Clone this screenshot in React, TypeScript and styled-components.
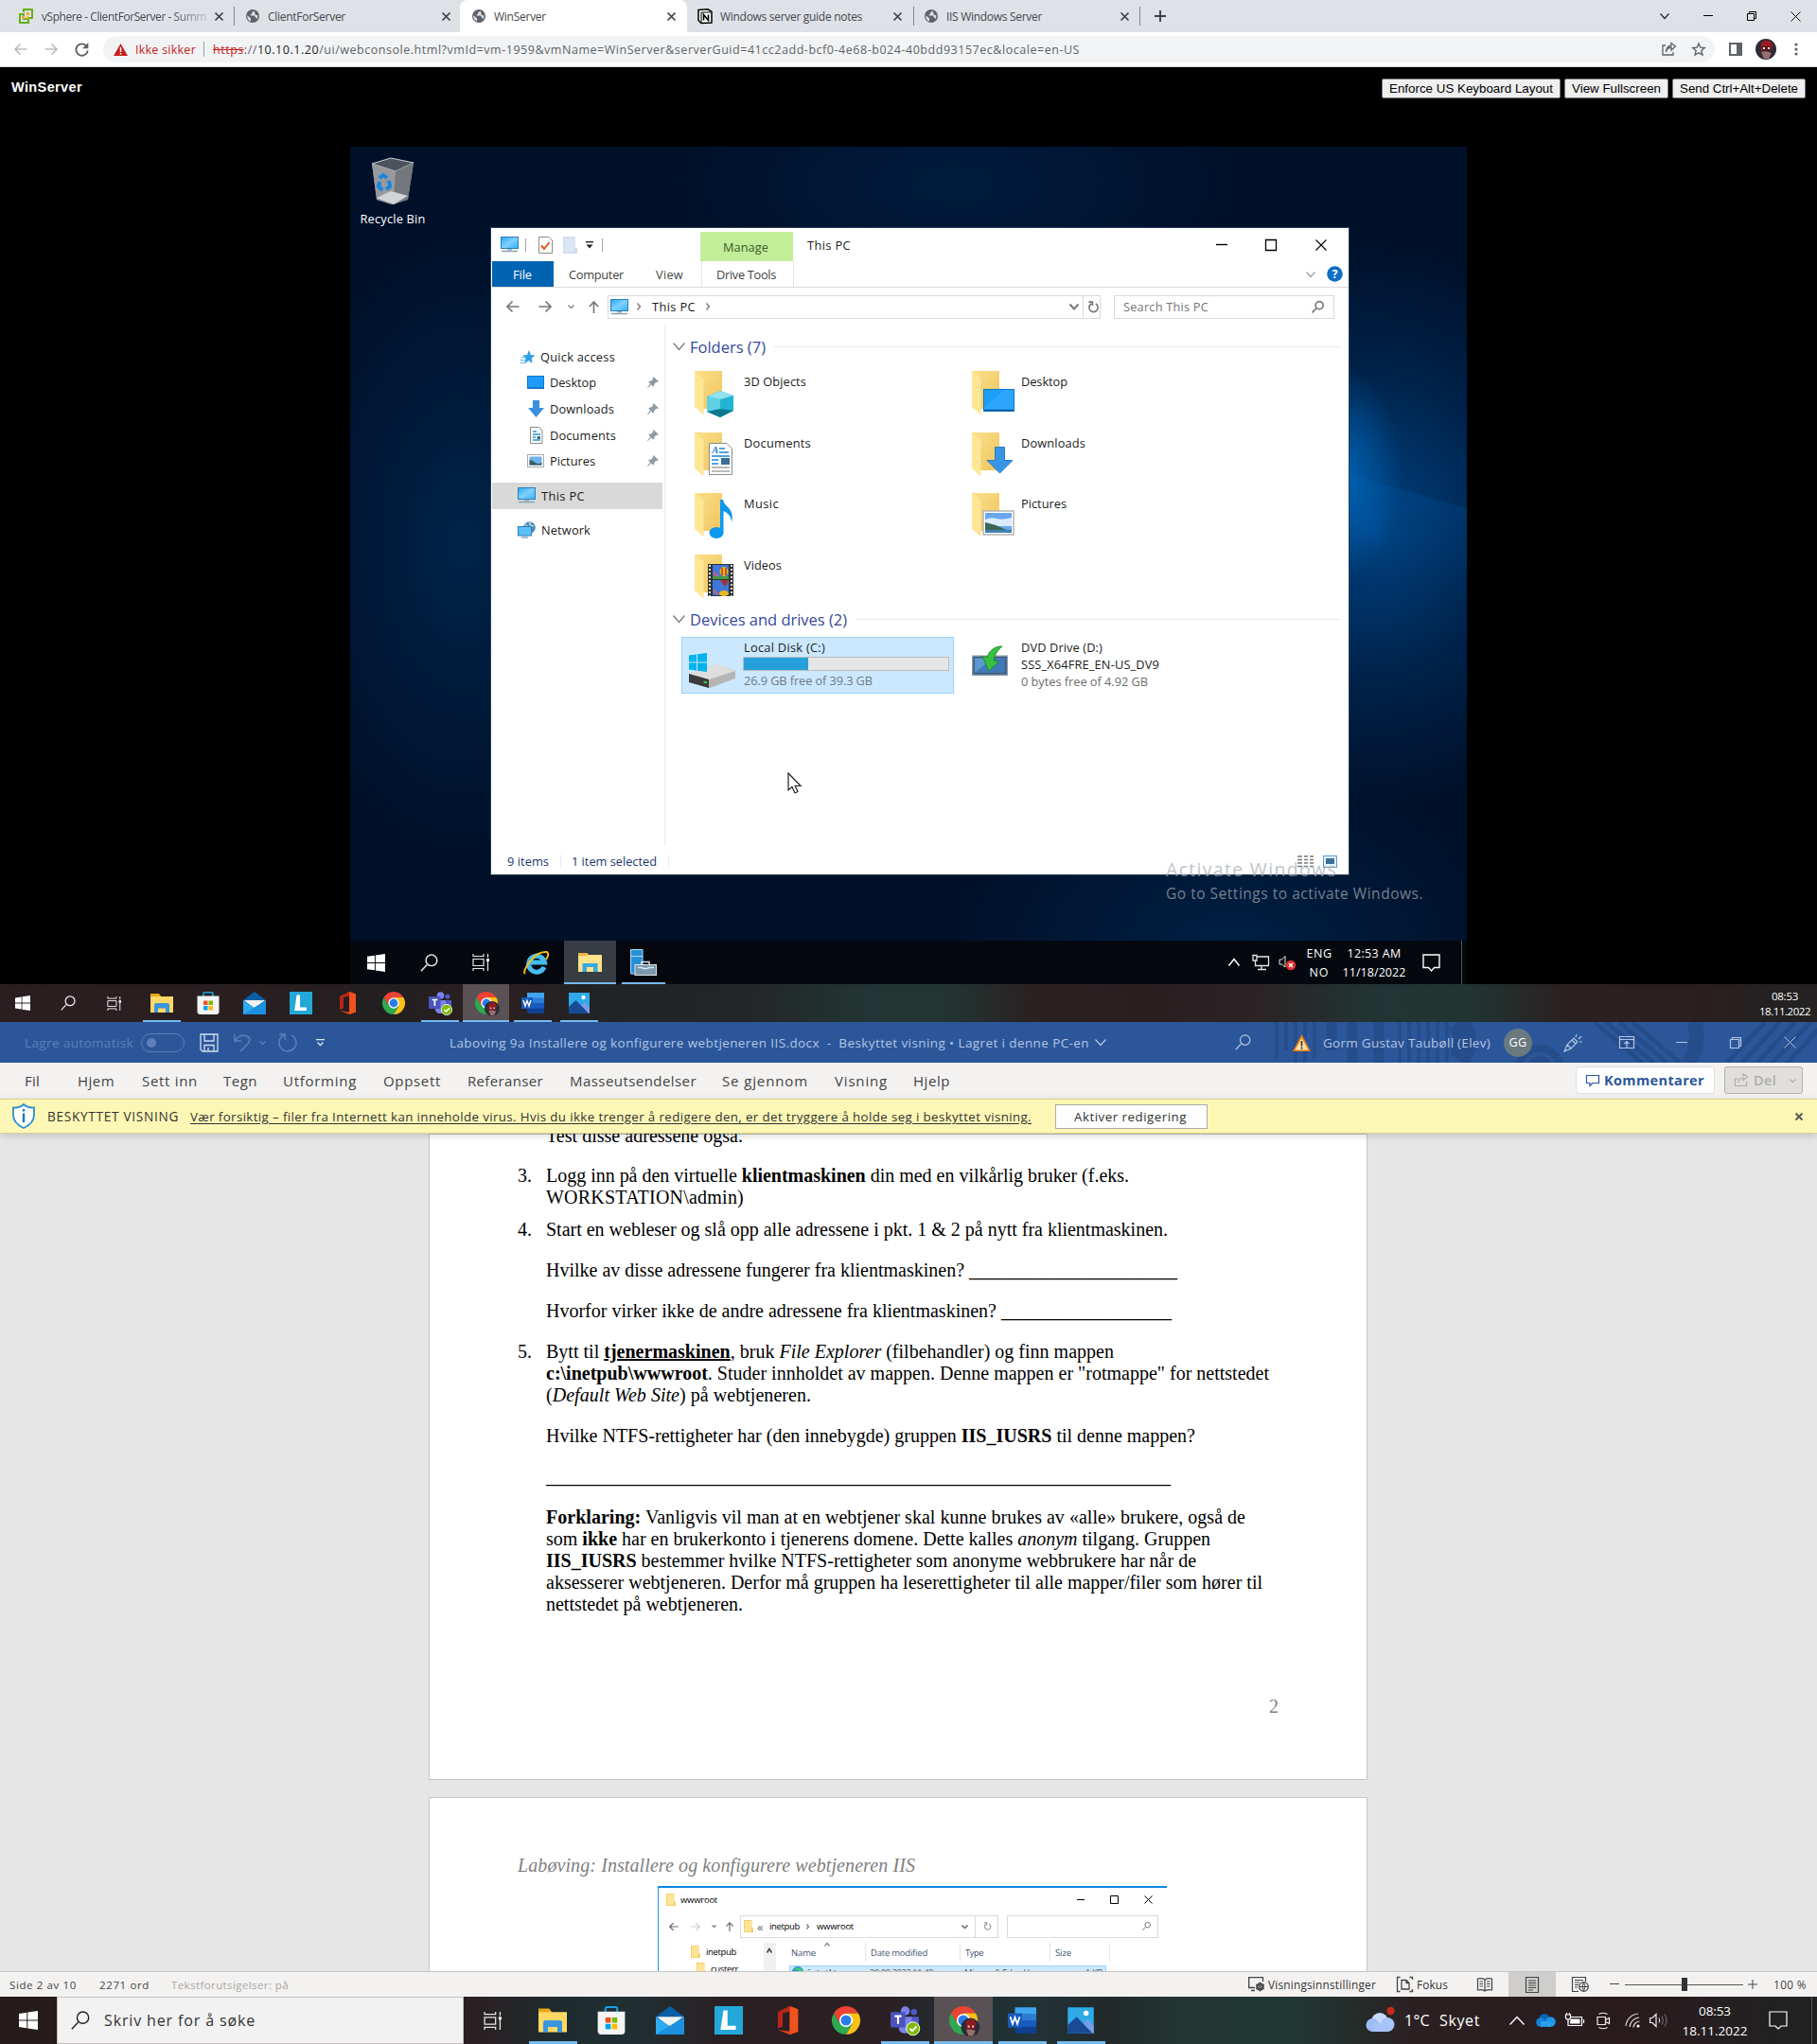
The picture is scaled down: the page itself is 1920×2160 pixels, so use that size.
import React, { useLayoutEffect, useRef } from 'react';
import styled, { createGlobalStyle, css } from 'styled-components';

const UI = `"Open Sans", "Noto Sans", sans-serif`;
const ARIAL = `"Liberation Sans", Arial, sans-serif`;
const SERIF = `"Liberation Serif", "Times New Roman", serif`;

const Global = createGlobalStyle`
  *, *::before, *::after { box-sizing: border-box; }
  html, body { margin: 0; padding: 0; background: #000; }
  body { width: 1920px; height: 2160px; overflow: hidden; font-family: ${UI}; }
`;

/* ---------- shared primitives ---------- */

type TextProps = {
  $w?: number; $ml?: number; $size?: number; $color?: string; $weight?: number; $font?: string;
  $italic?: boolean; $under?: boolean;
};

const TextBox = styled.span<TextProps>`
  display: block;
  flex: none;
  width: ${p => (p.$w ? p.$w + 'px' : 'auto')};
  margin-left: ${p => p.$ml || 0}px;
  font-family: ${p => p.$font || UI};
  font-size: ${p => p.$size || 13}px;
  font-weight: ${p => p.$weight || 400};
  font-style: ${p => (p.$italic ? 'italic' : 'normal')};
  color: ${p => p.$color || '#000'};
  white-space: pre;
  & > span { display: inline-block; ${p => p.$under && css`text-decoration: underline; text-underline-offset: 2px;`} }
`;

/* Single line of text whose tracking is adjusted to fill the given width. */
function Label({ w, ml, size, color, weight, font, italic, under, children }: {
  w?: number; ml?: number; size?: number; color?: string; weight?: number; font?: string;
  italic?: boolean; under?: boolean; children: React.ReactNode;
}) {
  const ref = useRef<HTMLSpanElement>(null);
  useLayoutEffect(() => {
    const el = ref.current;
    if (!el || !w) return;
    el.style.letterSpacing = '0px';
    const n = (el.textContent || '').length;
    el.style.letterSpacing = (w - el.getBoundingClientRect().width) / n + 'px';
  }, [w]);
  return (
    <TextBox $w={w} $ml={ml} $size={size} $color={color} $weight={weight} $font={font} $italic={italic} $under={under}>
      <span ref={ref}>{children}</span>
    </TextBox>
  );
}

const Glyph = styled.svg<{ $ml?: number }>`
  display: block;
  flex: none;
  overflow: visible;
  margin-left: ${p => p.$ml || 0}px;
`;

type IconProps = { w: number; h: number; ml?: number };

function Line({ w, h, ml, d, c = '#000', sw = 1, fill = 'none' }: IconProps & { d: string; c?: string; sw?: number; fill?: string }) {
  return (
    <Glyph width={w} height={h} viewBox={`0 0 ${w} ${h}`} $ml={ml}>
      <path d={d} stroke={c} strokeWidth={sw} fill={fill} />
    </Glyph>
  );
}

const Rule = styled.i<{ $w?: number; $h: number; $ml?: number; $c: string }>`
  display: block;
  flex: none;
  width: ${p => p.$w || 1}px;
  height: ${p => p.$h}px;
  margin-left: ${p => p.$ml || 0}px;
  background: ${p => p.$c};
`;

const Spring = styled.i`flex: 1;`;

/* ---------- common line icons ---------- */

const Cross = ({ s = 10, ml, c, sw = 1 }: { s?: number; ml?: number; c?: string; sw?: number }) =>
  <Line w={s} h={s} ml={ml} c={c} sw={sw} d={`M.5 .5L${s - 0.5} ${s - 0.5}M${s - 0.5} .5L.5 ${s - 0.5}`} />;
const Minus = ({ s = 10, ml, c, sw = 1 }: { s?: number; ml?: number; c?: string; sw?: number }) =>
  <Line w={s} h={2} ml={ml} c={c} sw={sw} d={`M0 .5H${s}`} />;
const Restore = ({ ml, c = '#000' }: { ml?: number; c?: string }) =>
  <Line w={10} h={10} ml={ml} c={c} d="M.5 2.5H7.5V9.5H.5zM2.5 2.5V.5H9.5V7.5H7.5" />;
const Chevron = ({ w = 10, h = 6, ml, c, sw = 1.2 }: { w?: number; h?: number; ml?: number; c?: string; sw?: number }) =>
  <Line w={w} h={h} ml={ml} c={c} sw={sw} d={`M.5 .5L${w / 2} ${h - 0.5}L${w - 0.5} .5`} />;
const Caret = ({ w = 10, h = 6, ml, c, sw = 1.2 }: { w?: number; h?: number; ml?: number; c?: string; sw?: number }) =>
  <Line w={w} h={h} ml={ml} c={c} sw={sw} d={`M.5 ${h - 0.5}L${w / 2} .5L${w - 0.5} ${h - 0.5}`} />;
const Right = ({ ml, s = 4, c = '#777' }: { ml?: number; s?: number; c?: string }) =>
  <Line w={s} h={s * 2} ml={ml} c={c} sw={1.3} d={`M.5 .5L${s - 0.5} ${s}L.5 ${s * 2 - 0.5}`} />;
const ArrowL = ({ s = 14, ml, c, sw = 1.7 }: { s?: number; ml?: number; c?: string; sw?: number }) => (
  <Glyph width={s} height={s} viewBox="0 0 14 14" $ml={ml}><path d="M13.5 7H1M6.5 1.5L1 7L6.5 12.5" stroke={c} strokeWidth={sw} fill="none" /></Glyph>
);
const ArrowR = ({ s = 14, ml, c, sw = 1.7 }: { s?: number; ml?: number; c?: string; sw?: number }) => (
  <Glyph width={s} height={s} viewBox="0 0 14 14" $ml={ml}><path d="M.5 7H13M7.5 1.5L13 7L7.5 12.5" stroke={c} strokeWidth={sw} fill="none" /></Glyph>
);
const ArrowU = ({ s = 14, ml, c = '#777' }: { s?: number; ml?: number; c?: string }) => (
  <Glyph width={s} height={s} viewBox="0 0 14 14" $ml={ml}><path d="M7 14V1M2 6.5L7 1L12 6.5" stroke={c} strokeWidth={1.8} fill="none" /></Glyph>
);
const Reload = ({ s = 13, ml, c = '#777', sw = 1.8 }: { s?: number; ml?: number; c?: string; sw?: number }) => (
  <Glyph width={s} height={s} viewBox="0 0 14 14" $ml={ml}>
    <path d="M9.5 3.2A5 5 0 1 1 4.500 3.200M1.500 1.200H5.800V5.500" stroke={c} strokeWidth={sw} fill="none" />
  </Glyph>
);
const Lens = ({ s = 14, ml, c = '#777', sw = 1.4 }: { s?: number; ml?: number; c?: string; sw?: number }) => (
  <Glyph width={s} height={s} viewBox="0 0 14 14" $ml={ml}>
    <path d="M.6 13.4L5.3 8.4" stroke={c} strokeWidth={sw} /><circle cx="8.8" cy="5" r="4.3" stroke={c} strokeWidth={sw} fill="none" />
  </Glyph>
);

/* ---------- coloured icons ---------- */

const Globe = ({ ml }: { ml?: number }) => (
  <Glyph width="14" height="14" viewBox="0 0 14 14" $ml={ml}>
    <circle cx="7" cy="7" r="7" fill="#5f6368" />
    <path d="M1.4 6.2L5 9.5V12.4A5.6 5.6 0 0 1 1.4 6.2M8.5 1.6C7.8 2.5 6 2.8 6 4.3S4.4 5 4.4 6.6H8.4C9.6 6.6 9.4 8.6 10.6 8.8L11.3 10.2A5.5 5.5 0 0 0 12.4 6.3C11 6.4 9.3 5.9 9.5 4.6S8.5 3 8.5 1.6z" fill="#dee1e6" />
  </Glyph>
);

const PcIcon = ({ ml, s = 19 }: { ml?: number; s?: number }) => (
  <Glyph width={s} height={(s * 17) / 19} viewBox="0 0 19 17" $ml={ml}>
    <defs><linearGradient id="pcg" x1="0" y1="0" x2="1" y2="1"><stop offset="0" stopColor="#2aa6f5" /><stop offset=".5" stopColor="#7fd0ff" /><stop offset="1" stopColor="#35b0fa" /></linearGradient></defs>
    <rect x=".5" y=".5" width="18" height="12" fill="url(#pcg)" stroke="#2b7fb5" />
    <path d="M7 13H12V14.5H7z" fill="#9bb3c2" /><path d="M1 15.5H18" stroke="#8aa4b5" strokeWidth="1.6" />
  </Glyph>
);

const NetIcon = ({ ml }: { ml?: number }) => (
  <Glyph width="19" height="18" viewBox="0 0 19 18" $ml={ml}>
    <circle cx="12.5" cy="6.5" r="6.3" fill="#4d8eb0" /><path d="M8 3Q12 6 9 10M14 .6Q10 4 17 5" stroke="#b9dcec" fill="none" strokeWidth="1.5" />
    <rect x=".5" y="5.5" width="14" height="9.5" fill="#5cc0fa" stroke="#2b7fb5" /><path d="M4 17H11" stroke="#8aa4b5" strokeWidth="1.4" />
  </Glyph>
);

const SmallFolder = ({ ml, w = 10, h = 13, ghost }: { ml?: number; w?: number; h?: number; ghost?: boolean }) => (
  <Glyph width={w} height={h} viewBox="0 0 10 13" preserveAspectRatio="none" $ml={ml}>
    <path d="M0 0H8.5V8.500H10V13H0z" fill={ghost ? '#cfdcf0' : '#f5d067'} /><path d="M1 1H8V12H1z" fill={ghost ? '#dbe5f5' : '#fde496'} />
  </Glyph>
);

function SideIcon({ kind }: { kind: string }) {
  return (
    <Glyph width="19" height="18" viewBox="0 0 19 18">
      {kind === 'star' && <><path d="M11 2L12.8 6.900L17.500 7.400L13.800 10.500L14.500 16L10.500 13L6 16.500L7.600 11L4.500 7.600L9 7z" fill="#2f9fe8" /><path d="M3 9.500H8M1.500 12.500H7M2 15.500H6" stroke="#62b6ee" strokeWidth="1.200" /></>}
      {kind === 'Desktop' && <><rect x=".5" y="2.5" width="17" height="13" fill="#1e9cf8" stroke="#1078c8" /><path d="M1 14.5H17" stroke="#0d68b0" strokeDasharray="2 1" /></>}
      {kind === 'Downloads' && <path d="M6 0H13V8H18L9.5 18L1 8H6z" fill="#3c8fdd" />}
      {kind === 'Documents' && <><path d="M3.5 .5H12.5L16 4V17.5H3.5z" fill="#fff" stroke="#888" /><path d="M6 5H10M6 8H14M6 11H9M6 14H14" stroke="#2d8fd0" strokeWidth="1.3" /><path d="M10.5 10H14V13H10.5z" fill="#3c6c8c" /></>}
      {kind === 'Pictures' && <><rect x=".5" y="2.5" width="17" height="13" fill="#fff" stroke="#aaa" /><rect x="2.5" y="4.5" width="13" height="9" fill="#6fb3f0" /><path d="M2.5 8Q7 9 9 11T15.5 11V13.5H2.5z" fill="#37615f" /></>}
    </Glyph>
  );
}

const Pin = ({ ml }: { ml?: number }) => (
  <Glyph width="12" height="12" viewBox="0 0 12 12" $ml={ml}><path d="M6.5 0L12 5.2L10.5 6L9.3 5.8L7.3 8L7.2 10L6.2 10.6L4.3 8.5L.6 12L0 11.6L3.3 7.6L1.2 5.7L2 4.7L4 4.6L6.2 2.5L5.9 1z" fill="#8e9aa4" /></Glyph>
);

function BigFolder({ kind }: { kind: string }) {
  return (
    <Glyph width="45" height="50" viewBox="0 0 45 50">
      <defs>
        <linearGradient id="fold" x1="0" y1="0" x2="1" y2="1"><stop offset="0" stopColor="#fbe08a" /><stop offset="1" stopColor="#eec45e" /></linearGradient>
      </defs>
      <path d="M0 1H29V41H8z" fill="url(#fold)" />
      <path d="M0 1L9.5 9V47.5L0 39z" fill="#ffe596" />
      {kind === '3D Objects' && <g><path d="M13 28L27 22L41 27V43L27 50L13 44z" fill="#22b4d2" /><path d="M13 28L27 22L41 27L27 31z" fill="#8fe3ee" /><path d="M13 28L27 31V50L13 44z" fill="#5ed2e4" /><path d="M13 44L27 41L41 43L27 50z" fill="#0c7890" /></g>}
      {kind === 'Documents' && <g><path d="M15.5 12.5H34L39.5 18V45.5H15.5z" fill="#fff" stroke="#8c8c8c" /><text x="18" y="23" fontFamily="Liberation Serif" fontStyle="italic" fontWeight="700" fontSize="11" fill="#1b87d4">A</text><path d="M26 18H32M26 22H36M18 26H37M18 30H25M18 34H25" stroke="#1b87d4" strokeWidth="1.4" /><path d="M28 28H37V35H28z" fill="#3b6f95" /><path d="M18 38H37M18 42H37" stroke="#777" /></g>}
      {kind === 'Music' && <g><ellipse cx="23" cy="43" rx="7.5" ry="6" fill="#0a98f0" /><path d="M27 8H30C31 16 43 17 39 32C39 24 33 21 30.5 20V43H27z" fill="#0a98f0" /></g>}
      {kind === 'Videos' && <g><rect x="14" y="11" width="27" height="34" fill="#333" /><path d="M16 12V45M39 12V45" stroke="#ddd" strokeWidth="2" strokeDasharray="2 2" /><path d="M19 12H36V27H19zM19 28H36V44H19z" fill="#3f78d8" /><path d="M19 24H36V27H19z" fill="#3f9b46" /><ellipse cx="31" cy="19" rx="4.5" ry="5" fill="#e8b820" /><path d="M29 15V23M33 15V23" stroke="#b32424" strokeWidth="1.3" /><path d="M27 28H36L32 35z" fill="#a53030" /><ellipse cx="31" cy="42" rx="5" ry="3" fill="#e8b820" /><path d="M20 20L25 24M20 39L25 43" stroke="#e25a6b" strokeWidth="2" /></g>}
      {kind === 'Desktop' && <g><rect x="12.5" y="20.5" width="32" height="23" fill="#1e9ffb" stroke="#0f77c4" /><path d="M13 40L34 21H44V42H13z" fill="#35acff" opacity=".6" /><path d="M13 42.5H44" stroke="#0b5d9c" strokeWidth="1.5" /></g>}
      {kind === 'Downloads' && <path d="M24.5 16.5H34.500V30.500H43L29.500 44L16 30.500H24.500z" fill="#3795e6" stroke="#2b7cc4" />}
      {kind === 'Pictures' && <g><rect x="12" y="20" width="32" height="25" fill="#fff" stroke="#b5b5b5" strokeWidth="1.5" /><rect x="14" y="22" width="28" height="21" fill="#6aa7ec" /><path d="M14 29Q20 26 26 28T42 27V36H14z" fill="#d9ecfb" /><path d="M14 32Q24 34 32 38T42 39V43H14z" fill="#3e6455" /><path d="M14 40H42V43H14z" fill="#4182b0" /></g>}
    </Glyph>
  );
}

const DiskIcon = () => (
  <Glyph width="50" height="38" viewBox="0 0 50 38">
    <path d="M0 22L30 12L49 19V27L22 37L0 31z" fill="#b5b5b5" /><path d="M0 22L30 12L49 19L21 28z" fill="#dedede" /><path d="M0 22L21 28V37L0 31z" fill="#3b3b3b" /><path d="M15.500 30.500L19 31.500" stroke="#3fd04a" strokeWidth="2.2" />
    <path d="M0 2.500L8 1.500V9.500H0zM9 1.300L19 0V9.500H9zM0 10.500H8V18.500L0 17.500zM9 10.500H19V20L9 18.700z" fill="#00b3ee" />
  </Glyph>
);

const DvdIcon = () => (
  <Glyph width="42" height="34" viewBox="0 0 42 34">
    <path d="M0 10.500H38V32H0z" fill="#8397ab" /><path d="M1.500 12H36.500V30.500H1.500z" fill="#3d5878" /><path d="M3 13.500H35V29H3z" fill="#5b98d2" /><path d="M3 29L22 13.500H35V29z" fill="#3f79b6" />
    <path d="M32 1C23 1 17 7 16.500 13L11 11.500L18 27L28 17.500L23 16C24 9 28 4 32 1z" fill="#35c13f" stroke="#1f8f2c" />
  </Glyph>
);

function WinLogo({ s = 19 }: { s?: number }) {
  return <Glyph width={s} height={s} viewBox="0 0 20 20"><path d="M0 3L8.300 1.800V9.500H0zM9.300 1.600L20 0V9.500H9.300zM0 10.500H8.300V18.200L0 17zM9.300 10.500H20V20L9.300 18.400z" fill="#fff" /></Glyph>;
}

const TaskView = ({ s = 16 }: { s?: number }) => (
  <Glyph width={s} height={s} viewBox="0 0 18 18"><path d="M1 0V2.500H12V0M1 18V15.500H12V18M1 5.500H12V12.500H1zM16.500 0V4M16.500 8V18" fill="none" stroke="#e8e8e8" strokeWidth="1.200" /><path d="M15 5H18V8H15z" fill="#fff" /></Glyph>
);

const Avatar = ({ s, ml }: { s: number; ml?: number }) => (
  <Glyph width={s} height={s} viewBox="0 0 22 22" $ml={ml}>
    <circle cx="11" cy="11" r="11" fill="#2c2c38" /><path d="M6 4L9 2H15L18 6L16 13H6z" fill="#9c1c22" /><path d="M7 8H16V13H7z" fill="#5a1519" /><path d="M8 9H10V11H8zM13 9H15V11H13z" fill="#f0e8e8" /><path d="M6 14Q11 12 17 15L14 21H9z" fill="#9a6e6c" />
  </Glyph>
);

function AppIcon({ name, s }: { name: string; s: number }) {
  return (
    <Glyph width={s} height={s} viewBox="0 0 24 24">
      {name === 'explorer' && <><path d="M0 2H9L11 4.500V8H0z" fill="#e6a817" /><path d="M0 5H24V22H0z" fill="#ffd866" /><path d="M4 22V14Q4 12 6 12H18Q20 12 20 14V22H16V17.500H8V22z" fill="#3a96dd" /></>}
      {name === 'store' && <><path d="M7 6V2Q7 .8 8 .8H16Q17 .8 17 2V6" fill="none" stroke="#1ba1e2" strokeWidth="1.600" /><path d="M.5 4.500H23.500V21Q23.500 24 20.500 24H3.500Q.5 24 .5 21z" fill="#f4f4f4" /><path d="M7 9.500H11.500V14H7z" fill="#f25022" /><path d="M12.500 9.500H17V14H12.500z" fill="#7fba00" /><path d="M7 15H11.500V19.500H7z" fill="#00a4ef" /><path d="M12.500 15H17V19.500H12.500z" fill="#ffb900" /></>}
      {name === 'mail' && <><path d="M0 9L12 0L24 9V12H0z" fill="#0a5ea8" /><path d="M1 9H23L12 18z" fill="#f2f2f2" /><path d="M0 9L12 17L24 9V24H0z" fill="#2eaaf0" /><path d="M0 24L24 9V24z" fill="#1c8fdf" /></>}
      {name === 'lens' && <><rect x="0" y="0" width="24" height="24" fill="#23a8d8" /><path d="M5 20L7.500 4V17z" fill="#0c4660" /><path d="M7.500 3.500H11V16.500H18V20H5z" fill="#fff" /></>}
      {name === 'office' && <><path d="M14 0L21 2.500V21.500L14 24L4 20.200L14 21.200V4.200L8 6V17L4 18.800V5z" fill="#dc3e15" /><path d="M14 0L21 2.500V21.500L14 24z" fill="#f0521e" /><path d="M14 0L4 5V18.800L8 17V6L14 4z" fill="#b8231a" /></>}
      {(name === 'chrome' || name === 'chromeUser') && <><path d="M1.600 6A12 12 0 0 1 22.400 6H12L6.800 15z" fill="#ea4335" /><path d="M22.400 6A12 12 0 0 1 12 24L17.200 15L12 6z" fill="#fbc116" /><path d="M12 24A12 12 0 0 1 1.600 6L6.800 15H17.200z" fill="#2da94f" /><circle cx="12" cy="12" r="5.700" fill="#fff" /><circle cx="12" cy="12" r="4.400" fill="#2a7de9" /></>}
      {name === 'chromeUser' && <g transform="translate(10 10) scale(.72)"><circle cx="11" cy="11" r="11" fill="#2c2c38" /><path d="M6 4L9 2H15L18 6L16 13H6z" fill="#8d1b21" /><path d="M8 9H10V11H8zM13 9H15V11H13z" fill="#f0d8d8" /><path d="M6 14Q11 12 17 15L14 21H9z" fill="#9a6e6c" /></g>}
      {name === 'teams' && <><circle cx="12.500" cy="4" r="3.800" fill="#7b83eb" /><circle cx="19.800" cy="5" r="2.600" fill="#5059c9" /><path d="M16 9H24V16Q23 20 18 19z" fill="#5059c9" /><path d="M7 9H18V18Q17 23 12 23T7 18z" fill="#7b83eb" /><rect x="0" y="5" width="12.500" height="13" fill="#4b53bc" /><path d="M3.500 8.500H9.300M6.400 8.500V15" stroke="#fff" strokeWidth="1.700" /><circle cx="19" cy="19" r="5.600" fill="#7fba00" stroke="#fff" strokeWidth=".8" /><path d="M16.300 19L18.300 21L22 17.200" stroke="#fff" strokeWidth="1.500" fill="none" /></>}
      {name === 'word' && <><path d="M6 1H24V7H6z" fill="#41a5ee" /><path d="M6 6.500H24V12.300H6z" fill="#2b7cd3" /><path d="M6 12H24V18H6z" fill="#185abd" /><path d="M6 17.500H24V23H6z" fill="#103f91" /><rect x="0" y="6" width="12" height="12" fill="#185abd" /><path d="M2 9L4 15L6 9.500L8 15L10 9" stroke="#fff" strokeWidth="1.400" fill="none" /></>}
      {name === 'photos' && <><rect x="1" y="1" width="22" height="22" fill="#2eaae8" /><path d="M12 17L18 11L23 17V23H12z" fill="#7a9be8" /><path d="M1 16L8.500 9L22 23H1z" fill="#1a4a94" /><circle cx="16.500" cy="6" r="2.200" fill="#fff" /></>}
    </Glyph>
  );
}

/* ---------- browser ---------- */

const Screen = styled.div`
  display: flex; flex-direction: column; width: 1920px; height: 2160px; overflow: hidden;
`;

const TabStrip = styled.div`
  display: flex; align-items: center; height: 34px; flex: none; background: #dee1e6; padding-bottom: 0;
`;

const Tab = styled.div<{ $w: number; $active?: boolean; $pl: number; $pr: number }>`
  display: flex; align-items: center; flex: none; height: 34px;
  width: ${p => p.$w}px; padding: 0 ${p => p.$pr}px 0 ${p => p.$pl}px;
  ${p => p.$active && css`background: #fff; border-radius: 8px 8px 0 0;`}
`;

const Faded = styled.div`
  display: flex; overflow: hidden; flex: none;
  mask-image: linear-gradient(90deg, #000 80%, rgba(0,0,0,.2));
`;

const Toolbar = styled.div`
  display: flex; align-items: center; height: 37px; flex: none; background: #fff; border-bottom: 1px solid #d5d8dc; padding-left: 15px;
`;

const Omnibox = styled.div`
  display: flex; align-items: center; flex: none; width: 1703px; height: 28px; margin-left: 15px;
  border-radius: 14px; background: #f1f3f4; padding-left: 11px;
`;

const Strike = styled.s`color: #c5221f;`;
const Host = styled.span`color: #202124;`;

const tabText = { size: 12, color: '#45484d' };

function Browser() {
  return (
    <>
      <TabStrip>
        <Tab $w={247} $pl={20} $pr={11}>
          <Glyph width="15" height="16" viewBox="0 0 15 16">
            <path d="M5 4V1H14V10H10M5 6H1V15H10V11H5z" fill="none" stroke="#62b01e" strokeWidth="2" /><path d="M3 8H6V11H3zM8 4H11V7H8zM8 8.500H10.500V11H8z" fill="#f7a823" />
          </Glyph>
          <Faded><Label w={174} ml={9} {...tabText}>vSphere - ClientForServer - Summ</Label></Faded>
          <Spring /><Cross s={9} c="#3c4043" sw={1.7} />
        </Tab>
        <Rule $h={20} $c="#84878c" />
        <Tab $w={238} $pl={12} $pr={10}><Globe /><Label w={82} ml={9} {...tabText}>ClientForServer</Label><Spring /><Cross s={9} c="#3c4043" sw={1.7} /></Tab>
        <Tab $w={240} $pl={13} $pr={12} $active><Globe /><Label w={55} ml={9} {...tabText}>WinServer</Label><Spring /><Cross s={9} c="#3c4043" sw={1.7} /></Tab>
        <Tab $w={239} $pl={11} $pr={12}>
          <Glyph width="16" height="16" viewBox="0 0 16 16"><path d="M1 1.500L11 .8L15 3.500V15L4 15.500L1 12.500z" fill="#fff" stroke="#000" strokeWidth="1.500" /><path d="M4 4H14M4 4V15" stroke="#000" /><path d="M6.500 12.500V6.500L11.500 12.500V6.500" fill="none" stroke="#000" strokeWidth="1.600" /></Glyph>
          <Label w={150} ml={8} {...tabText}>Windows server guide notes</Label><Spring /><Cross s={9} c="#3c4043" sw={1.7} />
        </Tab>
        <Rule $h={20} $c="#84878c" />
        <Tab $w={238} $pl={11} $pr={11}><Globe /><Label w={101} ml={9} {...tabText}>IIS Windows Server</Label><Spring /><Cross s={9} c="#3c4043" sw={1.7} /></Tab>
        <Rule $h={20} $c="#84878c" />
        <Line w={12} h={12} ml={15} d="M6 0V12M0 6H12" c="#3c4043" sw={1.9} />
        <Chevron w={10} h={6} ml={522} c="#222" />
        <Minus s={10} ml={36} />
        <Restore ml={36} />
        <Cross s={11} ml={36} c="#111" />
      </TabStrip>
      <Toolbar>
        <ArrowL c="#babcbe" /><ArrowR ml={18} c="#babcbe" />
        <Glyph width="15" height="15" viewBox="0 0 15 15" $ml={18}><path d="M12.800 4.200A6.200 6.200 0 1 0 13.700 8.500" fill="none" stroke="#5f6368" strokeWidth="1.900" /><path d="M14.300 0V6.300H8z" fill="#5f6368" /></Glyph>
        <Omnibox>
          <Glyph width="15" height="13" viewBox="0 0 15 13"><path d="M7.500 0L15 13H0z" fill="#c5221f" /><path d="M7.500 4V9M7.500 10V11.500" stroke="#fff" strokeWidth="1.500" /></Glyph>
          <Label w={64} ml={8} size={12.500} color="#c5221f">Ikke sikker</Label>
          <Rule $h={16} $ml={8} $c="#9aa0a6" />
          <Label w={916} ml={9} size={12.500} color="#5f6368"><Strike>https</Strike>://<Host>10.10.1.20</Host>/ui/webconsole.html?vmId=vm-1959&amp;vmName=WinServer&amp;serverGuid=41cc2add-bcf0-4e68-b024-40bdd93157ec&amp;locale=en-US</Label>
          <Line w={15} h={14} ml={615} c="#5f6368" sw={1.3} d="M4 3H1V13H12V10M4.500 10Q5 5.500 10 5V8L14.500 4L10 .5V3Q5 3.500 4.500 10z" />
          <Line w={14} h={14} ml={17} c="#5f6368" sw={1.4} d="M7 1L8.800 5.200L13.300 5.600L9.900 8.600L10.900 13L7 10.700L3.100 13L4.100 8.600L.7 5.600L5.200 5.200z" />
        </Omnibox>
        <Glyph width="14" height="14" viewBox="0 0 14 14" $ml={15}><path d="M1 1H13V13H1z" fill="none" stroke="#5f6368" strokeWidth="2" /><path d="M8 1H13V13H8z" fill="#5f6368" /></Glyph>
        <Avatar s={22} ml={14} />
        <Glyph width="4" height="14" viewBox="0 0 4 14" $ml={19}><circle cx="2" cy="2" r="1.600" fill="#5f6368" /><circle cx="2" cy="7" r="1.600" fill="#5f6368" /><circle cx="2" cy="12" r="1.600" fill="#5f6368" /></Glyph>
      </Toolbar>
    </>
  );
}

const ConsoleHead = styled.div`
  display: flex; align-items: flex-start; flex: none; height: 84px; background: #000; padding: 12px 12px 0;
`;
const WebButton = styled.button<{ $w: number; $ml?: number }>`
  display: flex; align-items: center; justify-content: center; flex: none;
  width: ${p => p.$w}px; height: 21px; margin: 0 0 0 ${p => p.$ml || 0}px; padding: 0;
  background: #efefef; border: 1px solid #767676; border-radius: 2px;
`;
const HeadTitle = styled.div`padding-top: 1px; flex: 1;`;

/* ---------- virtual machine ---------- */

const VmRow = styled.div`display: flex; justify-content: center; flex: none; height: 885px; background: #000;`;
const VmScreen = styled.div`
  position: relative; display: flex; flex-direction: column; width: 1180px; height: 885px; overflow: hidden;
  background:
    radial-gradient(ellipse 60px 110px at 1052px 345px, rgba(0,120,215,.6), transparent),
    linear-gradient(196deg, transparent 44%, rgba(0,120,220,.12) 44.200%, transparent 60%) 930px 130px / 250px 500px no-repeat,
    radial-gradient(ellipse 260px 300px at 1080px 400px, rgba(0,86,165,.72), rgba(0,60,120,.4) 55%, transparent),
    radial-gradient(ellipse 190px 330px at 120px 420px, rgba(0,48,94,.6), transparent),
    radial-gradient(ellipse 300px 130px at 640px 40px, rgba(0,36,75,.6), transparent),
    radial-gradient(ellipse 300px 220px at 930px 860px, rgba(0,44,88,.6), transparent),
    #001029;
`;
const DesktopIcon = styled.div`
  position: absolute; left: 10px; top: 12px; display: flex; flex-direction: column; align-items: center; gap: 6px; width: 70px;
`;
const Explorer = styled.div`
  position: absolute; left: 148px; top: 85px; width: 908px; height: 685px; display: flex; flex-direction: column;
  background: #fff; border: 1px solid #29425f; padding-left: 1px;
`;
const ExTitle = styled.div`display: flex; height: 35px; align-items: center; flex: none; padding-left: 9px;`;
const ManageTab = styled.div`
  display: flex; align-items: center; flex: none; align-self: flex-end; width: 98px; height: 31px; margin-left: 103px; background: #c2ee9a; padding-left: 24px;
`;
const ExTabs = styled.div`display: flex; height: 28px; align-items: center; flex: none; border-bottom: 1px solid #dadbdc;`;
const FileTab = styled.div`display: flex; align-items: center; width: 65px; height: 27px; background: #0063b1; padding-left: 22px; flex: none;`;
const DriveTab = styled.div`display: flex; align-items: center; width: 98px; height: 27px; padding-left: 15px; margin-left: 19px; border: solid #e3e3e3; border-width: 0 1px; flex: none;`;
const ExNav = styled.div`display: flex; align-items: center; flex: none; height: 40px; padding-left: 15px;`;
const Field = styled.div<{ $w: number; $h: number; $ml?: number; $pl?: number }>`
  display: flex; align-items: center; flex: none; width: ${p => p.$w}px; height: ${p => p.$h}px; margin-left: ${p => p.$ml || 0}px;
  padding-left: ${p => p.$pl || 0}px; border: 1px solid #d9d9d9; background: #fff;
`;
const ExBody = styled.div`display: flex; flex: 1; min-height: 0;`;
const Side = styled.div`display: flex; flex-direction: column; width: 183px; border-right: 1px solid #ececec; padding-top: 19px; flex: none; margin-bottom: 2px;`;
const SideRow = styled.div<{ $pl: number; $mt?: number; $on?: boolean }>`
  display: flex; align-items: center; flex: none; height: 27.600px; width: 180px; padding-left: ${p => p.$pl}px; margin-top: ${p => p.$mt || 0}px;
  background: ${p => (p.$on ? '#d9d9d9' : 'transparent')};
`;
const Main = styled.div`display: flex; flex-direction: column; flex: 1; padding: 10px 9px 0 8px;`;
const GroupHead = styled.div<{ $mt?: number }>`display: flex; align-items: center; height: 24px; flex: none; margin-top: ${p => p.$mt || 0}px;`;
const GroupLine = styled.i`flex: 1; height: 1px; margin-left: 9px; background: #e6e6e6;`;
const Tiles = styled.div`display: grid; grid-template-columns: 293px 293px; grid-auto-rows: 64.600px; padding: 13px 0 0 23px;`;
const Tile = styled.div`display: flex; align-items: flex-start;`;
const TileText = styled.div<{ $ml: number; $pt?: number }>`margin-left: ${p => p.$ml}px; padding-top: ${p => p.$pt || 0}px; display: flex; flex-direction: column;`;
const Drives = styled.div`display: flex; padding: 7px 0 0 9px;`;
const Disk = styled.div`
  display: flex; width: 288px; height: 60px; background: #cce8ff; border: 1px solid #99d1ff; padding: 0 0 0 7px; flex: none;
`;
const Gauge = styled.div`width: 218px; height: 15px; margin: 1px 0 1px -1px; border: 1px solid #bcbcbc; background: #e6e6e6;`;
const GaugeFill = styled.div`width: 68px; height: 13px; background: #26a0da;`;
const Dvd = styled.div`display: flex; padding-left: 19px;`;
const ExStatus = styled.div`display: flex; align-items: center; height: 28px; flex: none; padding-left: 16px;`;
const Watermark = styled.div`position: absolute; left: 862px; top: 750px; display: flex; flex-direction: column; gap: 1px;`;
const Pointer = styled.div`position: absolute; left: 462px; top: 661px;`;
const Down = styled.div<{ $y: number }>`padding-top: ${p => p.$y}px; flex: none;`;

const VmTaskbar = styled.div`
  display: flex; align-items: center; height: 46px; margin-top: auto; background: #05090f; flex: none; padding-left: 0;
`;
const VmButton = styled.div<{ $w: number; $ml?: number; $active?: boolean; $open?: boolean }>`
  display: flex; align-items: center; justify-content: center; flex: none; width: ${p => p.$w}px; height: 46px; margin-left: ${p => p.$ml || 0}px;
  background: ${p => (p.$active ? '#383c43' : 'transparent')};
  box-shadow: ${p => (p.$open ? 'inset 0 -2px #76b9ed' : 'none')};
`;
const ClockCol = styled.div<{ $w: number; $ml: number; $gap: number }>`
  display: flex; flex-direction: column; align-items: center; flex: none; gap: ${p => p.$gap}px; width: ${p => p.$w}px; margin-left: ${p => p.$ml}px;
`;

const s13 = { size: 12.8, color: '#1b1b1b' };

function FolderTile({ name, w }: { name: string; w: number }) {
  return <Tile><BigFolder kind={name} /><TileText $ml={7} $pt={3}><Label w={w} {...s13}>{name}</Label></TileText></Tile>;
}

function VirtualMachine() {
  return (
    <VmScreen>
      <DesktopIcon>
        <Glyph width="44" height="49" viewBox="0 0 44 49">
          <path d="M0 6L20 0L44 5L38 44L20 49L5 44z" fill="#83878d" /><path d="M0 6L20 0L44 5L25 14z" fill="#4d535c" stroke="#c7cbd0" /><path d="M0 6L25 14L23 49L5 44z" fill="#969a9f" /><path d="M25 14L44 5L38 44L23 49z" fill="#74787e" /><path d="M5 42L20 35L38 40L23 49z" fill="#d2d4d6" />
          <path d="M8 21L12 18L16 21M18 24L19 30L15 33M11 34L7 30L8 25" fill="none" stroke="#1784dc" strokeWidth="4" />
        </Glyph>
        <Label w={69} size={12.8} color="#fff">Recycle Bin</Label>
      </DesktopIcon>

      <Explorer>
        <ExTitle>
          <PcIcon /><Rule $h={14} $ml={7} $c="#a5a5a5" />
          <Glyph width="15" height="18" viewBox="0 0 15 18" $ml={13}><path d="M.5 .5H11L14.500 4V17.500H.5z" fill="#fff" stroke="#8c8c8c" /><path d="M3 9.500L6 13L11.500 6" fill="none" stroke="#e8541e" strokeWidth="2" /></Glyph>
          <SmallFolder w={15} h={18} ml={11} ghost />
          <Glyph width="8" height="8" viewBox="0 0 8 8" $ml={9}><path d="M0 .7H8" stroke="#222" strokeWidth="1.400" /><path d="M.5 3.500H7.500L4 7.500z" fill="#222" /></Glyph>
          <Rule $h={14} $ml={9} $c="#a5a5a5" />
          <ManageTab><Label w={48} size={12.8} color="#3c5a28">Manage</Label></ManageTab>
          <Label w={46} ml={15} {...s13}>This PC</Label>
          <Minus s={12} ml={386} sw={1.4} />
          <Line w={12} h={12} ml={40} d="M.5 .5H11.500V11.500H.5z" sw={1.3} />
          <Cross s={12} ml={41} sw={1.2} />
        </ExTitle>
        <ExTabs>
          <FileTab><Label w={20} size={12.8} color="#fff">File</Label></FileTab>
          <Label w={58} ml={16} {...s13} color="#444">Computer</Label>
          <Label w={29} ml={34} {...s13} color="#444">View</Label>
          <DriveTab><Label w={63} {...s13} color="#444">Drive Tools</Label></DriveTab>
          <Chevron w={10} h={6} ml={541} c="#a0a0a0" />
          <Glyph width="17" height="17" viewBox="0 0 17 17" $ml={12}><circle cx="8.500" cy="8.500" r="8.300" fill="#0f6fc5" /><text x="8.500" y="13" textAnchor="middle" fontFamily="Open Sans" fontWeight="700" fontSize="12" fill="#fff">?</text></Glyph>
        </ExTabs>
        <ExNav>
          <ArrowL ml={0} c="#767676" /><ArrowR ml={20} c="#767676" /><Chevron w={7} h={4} ml={17} c="#888" sw={1.5} /><ArrowU ml={14} s={13} />
          <Field $w={521} $h={25} $ml={8} $pl={2}>
            <PcIcon /><Right ml={9} /><Label w={46} ml={12} {...s13}>This PC</Label><Right ml={11} />
            <Chevron w={10} h={6} ml={380} c="#777" sw={2} /><Rule $h={23} $ml={4} $c="#d9d9d9" /><Reload ml={4} />
          </Field>
          <Field $w={233} $h={25} $ml={14} $pl={9}>
            <Label w={90} size={12.8} color="#767676">Search This PC</Label><Lens ml={109} sw={1.8} s={13} />
          </Field>
        </ExNav>
        <ExBody>
          <Side>
            <SideRow $pl={28}><SideIcon kind="star" /><Label w={79} ml={4} {...s13}>Quick access</Label></SideRow>
            {([['Desktop', 49], ['Downloads', 68], ['Documents', 70], ['Pictures', 48]] as [string, number][]).map(([n, w]) => (
              <SideRow key={n} $pl={37}><SideIcon kind={n} /><Label w={w} ml={5} {...s13}>{n}</Label><Pin ml={103 - w} /></SideRow>
            ))}
            <SideRow $pl={27} $mt={9} $on><PcIcon /><Label w={46} ml={6} {...s13}>This PC</Label></SideRow>
            <SideRow $pl={27} $mt={9}><NetIcon /><Label w={52} ml={6} {...s13}>Network</Label></SideRow>
          </Side>
          <Main>
            <GroupHead><Chevron w={13} h={8} c="#777" /><Label w={80} ml={5} size={16.5} color="#36489c">Folders (7)</Label><GroupLine /></GroupHead>
            <Tiles>
              <FolderTile name="3D Objects" w={66} /><FolderTile name="Desktop" w={49} />
              <FolderTile name="Documents" w={71} /><FolderTile name="Downloads" w={68} />
              <FolderTile name="Music" w={37} /><FolderTile name="Pictures" w={48} />
              <FolderTile name="Videos" w={40} />
            </Tiles>
            <GroupHead $mt={-7}><Chevron w={13} h={8} c="#777" /><Label w={166} ml={5} size={16.500} color="#36489c">Devices and drives (2)</Label><GroupLine /></GroupHead>
            <Drives>
              <Disk>
                <Down $y={16}><DiskIcon /></Down>
                <TileText $ml={8} $pt={1}>
                  <Label w={86} {...s13}>Local Disk (C:)</Label>
                  <Gauge><GaugeFill /></Gauge>
                  <Label w={136} size={12.800} color="#6d7a85">26.9 GB free of 39.3 GB</Label>
                </TileText>
              </Disk>
              <Dvd>
                <Down $y={9}><DvdIcon /></Down>
                <TileText $ml={10} $pt={2}>
                  <Label w={86} {...s13}>DVD Drive (D:)</Label><Label w={146} {...s13}>SSS_X64FRE_EN-US_DV9</Label><Label w={134} size={12.800} color="#6d6d6d">0 bytes free of 4.92 GB</Label>
                </TileText>
              </Dvd>
            </Drives>
          </Main>
        </ExBody>
        <ExStatus>
          <Label w={44} size={12.800} color="#22386b">9 items</Label><Rule $h={14} $ml={12} $c="#ececec" />
          <Label w={90} ml={11} size={12.800} color="#22386b">1 item selected</Label><Rule $h={14} $ml={12} $c="#ececec" />
          <Line w={17} h={13} ml={664} c="#777" sw={1.300} d="M0 1H5M7 1H11M13 1H17M0 4.500H5M7 4.500H11M13 4.500H17M0 8H5M7 8H11M13 8H17M0 11.500H5M7 11.500H11M13 11.500H17" />
          <Glyph width="15" height="13" viewBox="0 0 15 13" $ml={10}><rect x=".5" y=".5" width="14" height="12" fill="#e5f1fb" stroke="#5a9fd6" /><path d="M3 3H12V9H3z" fill="#3f6f98" /></Glyph>
        </ExStatus>
      </Explorer>
      <Pointer><Line w={15} h={23} c="#222" sw={1.200} fill="#fff" d="M1 1V19L5 15.500L8 22L11 20.500L8.200 14.500H14z" /></Pointer>
      <Watermark>
        <Label w={181} size={19.500} color="rgba(165,172,180,.72)">Activate Windows</Label>
        <Label w={272} size={15.500} color="rgba(165,172,180,.72)">Go to Settings to activate Windows.</Label>
      </Watermark>

      <VmTaskbar>
        <VmButton $w={54}><WinLogo /></VmButton>
        <VmButton $w={54} $ml={2}><Lens s={19} c="#e8e8e8" sw={1.100} /></VmButton>
        <VmButton $w={54} $ml={1}><TaskView s={18} /></VmButton>
        <VmButton $w={54} $ml={4}>
          <Glyph width="27" height="27" viewBox="0 0 27 27"><path d="M22 18A8.500 8.500 0 1 1 22.500 13H8" fill="none" stroke="#45bdf0" strokeWidth="5" /><path d="M2 25Q-1 23 7 12T25 2Q28 4 24 10" fill="none" stroke="#f2bd1b" strokeWidth="2" /></Glyph>
        </VmButton>
        <VmButton $w={55} $ml={3} $active $open>
          <Glyph width="25" height="22" viewBox="0 0 25 22"><path d="M0 1H9L11 3H25V21H0z" fill="#ffe28c" /><path d="M0 1H9L10 4H0z" fill="#e8b53b" /><path d="M4.500 21V12H20.500V21H16V16H9V21z" fill="#36a9e0" /></Glyph>
        </VmButton>
        <VmButton $w={46} $ml={6} $open>
          <Glyph width="28" height="28" viewBox="0 0 28 28"><path d="M.5 .5H13V26H.5z" fill="#2490dc" stroke="#b5dcf5" /><path d="M1 7.500H13" stroke="#b5dcf5" /><rect x="5" y="16.500" width="22.500" height="11" fill="#7b99ad" stroke="#dce6ec" /><path d="M12 16V13.500H20V16M8 19.500H12L14 20.500H18L20 19.500H25" fill="none" stroke="#dce6ec" strokeWidth="1.500" /></Glyph>
        </VmButton>
        <Spring />
        <Caret w={12} h={8} c="#fff" sw={1.500} />
        <Line w={18} h={16} ml={13} c="#e6e6e6" sw={1.300} d="M5 2H17.500V11.500H3.500V6M1 .5H5V6H1zM10 11.500V15M6 15.500H15" />
        <Glyph width="19" height="16" viewBox="0 0 19 16" $ml={10}><path d="M1 5H3.500L7 1.500V13L3.500 10H1z" fill="none" stroke="#e6e6e6" /><circle cx="13" cy="11" r="5.200" fill="#e03131" /><path d="M11 9L15 13M15 9L11 13" stroke="#fff" strokeWidth="1.400" /></Glyph>
        <ClockCol $w={28} $ml={10} $gap={3}><Label w={27} size={12.500} color="#fff">ENG</Label><Label w={21} size={12.500} color="#fff">NO</Label></ClockCol>
        <ClockCol $w={68} $ml={10} $gap={3}><Label w={57} size={12.500} color="#fff">12:53 AM</Label><Label w={67} size={12.500} color="#fff">11/18/2022</Label></ClockCol>
        <Line w={19} h={19} ml={17} c="#fff" sw={1.400} d="M1 1H18V14.500H12.500L9.500 18L6.500 14.500H1z" />
        <Rule $h={46} $ml={22} $c="#50555c" /><Rule $w={5} $h={1} $c="transparent" />
      </VmTaskbar>
    </VmScreen>
  );
}

/* ---------- host taskbars ---------- */

const HostBar = styled.div<{ $h: number }>`
  display: flex; align-items: center; flex: none; height: ${p => p.$h}px;
  background: linear-gradient(90deg, #2b1e20 0, #291f21 14%, #221f20 22%, #2c1f21 27%, #202425 34%, #232628 41%, #223534 48%, #223533 52%, #2a2021 57%, #2b1e21 64%, #2a2527 70%, #213534 76%, #203432 81%, #2b2021 86%, #2b1f20 93%, #232122 98%);
`;
const BottomBar = styled(HostBar)`
  background: linear-gradient(90deg, #261a1a 0, #261a1a 25%, #2b2023 26%, #1e2b2e 31%, #212f33 35%, #2a1f22 40%, #2b2023 49%, #1f2f33 53%, #213336 57%, #22282a 61%, #223634 65%, #203734 71%, #2b2022 78%, #291b1d 90%, #212122 98%);
`;
const HostButton = styled.div<{ $w: number; $open?: boolean; $active?: boolean; $line?: number; $h: number }>`
  display: flex; align-items: center; justify-content: center; flex: none; width: ${p => p.$w}px; height: ${p => p.$h}px;
  ${p => p.$active && css`background-color: #595153;`}
  ${p => (p.$open || p.$active) && css`
    background-image: linear-gradient(#76b9ed, #76b9ed);
    background-size: ${p.$active ? p.$w : p.$line}px ${p.$h === 40 ? 2 : 3}px;
    background-position: center bottom; background-repeat: no-repeat;
  `}
`;
const apps = ['explorer', 'store', 'mail', 'lens', 'office', 'chrome', 'teams', 'chromeUser', 'word', 'photos'];
const openApps = ['explorer', 'teams', 'word', 'photos'];

const AppButtons = ({ w, h, s, line }: { w: number; h: number; s: number; line: number }) => (
  <>
    {apps.map(a => (
      <HostButton key={a} $w={w} $h={h} $line={line} $open={openApps.includes(a)} $active={a === 'chromeUser'}><AppIcon name={a} s={s} /></HostButton>
    ))}
  </>
);

/* ---------- word ---------- */

const WordTitle = styled.div`
  position: relative; display: flex; align-items: center; flex: none; height: 43px; background: #2b579a; padding-left: 26px; overflow: hidden;
  & > * { position: relative; }
`;
const Decoration = styled.div`&& { position: absolute; left: 1345px; top: 0; }`;
const Toggle = styled.div`width: 46px; height: 20px; margin-left: 8px; border: 1px solid #5b7fb8; border-radius: 10px; padding: 4px 5px; flex: none;`;
const Knob = styled.div`width: 10px; height: 10px; border-radius: 5px; background: #5b7fb8;`;
const Badge = styled.div`display: flex; align-items: center; justify-content: center; flex: none; width: 30px; height: 30px; margin-left: 14px; border-radius: 50%; background: #69797e;`;
const Ribbon = styled.div`display: flex; align-items: center; flex: none; height: 38px; background: #f3f2f1; padding: 0 0 1px 26px;`;
const RibbonButton = styled.div<{ $w: number; $ml?: number; $off?: boolean }>`
  display: flex; align-items: center; flex: none; width: ${p => p.$w}px; height: 29px; margin-left: ${p => p.$ml || 0}px; padding-left: 10px;
  border: 1px solid ${p => (p.$off ? '#b3b0ad' : '#e1dfdd')}; border-radius: 3px; background: ${p => (p.$off ? '#e1dfdd' : '#fff')};
`;
const Notice = styled.div`
  display: flex; align-items: center; flex: none; height: 37px; background: #fdf7b5; padding-left: 13px;
  border: solid #d6d28c; border-width: 1px 0; box-shadow: 0 2px 8px rgba(0,0,0,.16); position: relative;
`;
const NoticeButton = styled.div`display: flex; align-items: center; flex: none; width: 161px; height: 26px; margin-left: 25px; padding-left: 19px; background: #fdfdfd; border: 1px solid #ababab;`;
const Canvas = styled.div`
  display: flex; flex-direction: column; align-items: flex-start; flex: none; height: 885px; background: #e6e6e6; padding-left: 453px; overflow: hidden; gap: 18px;
`;
const Page = styled.div<{ $h: number }>`
  display: flex; flex-direction: column; flex: none; width: 992px; height: ${p => p.$h}px; background: #fff; border: 1px solid #c6c6c6; padding-left: 123px;
`;
const Para = styled.div<{ $mt?: number; $n?: boolean }>`
  display: grid; grid-template-columns: ${p => (p.$n ? '30px auto' : 'auto')}; justify-content: start;
  margin-left: ${p => (p.$n ? -30 : 0)}px; margin-top: ${p => p.$mt || 0}px; line-height: 23px;
`;
const Head2 = styled.div`padding-top: 60px; margin-left: -30px; line-height: 23px;`;
const PageNumber = styled.div`margin-top: 85px; padding-left: 764px; line-height: 23px;`;

const Doc = ({ w, children }: { w: number; children: React.ReactNode }) => <Label w={w} size={20} font={SERIF}>{children}</Label>;

const Shot = styled.div`
  display: flex; flex-direction: column; width: 538px; height: 120px; margin: 10px 0 0 118px; flex: none;
  border-left: 1px solid #1a9ae0; border-top: 2px solid #0a86e0; background: #fff;
`;
const ShotRow = styled.div<{ $h: number; $pl: number }>`display: flex; align-items: center; flex: none; height: ${p => p.$h}px; padding-left: ${p => p.$pl}px;`;
const ShotBody = styled.div`display: flex; padding-top: 2px;`;
const ShotSide = styled.div`display: flex; flex-direction: column; width: 111px; flex: none;`;
const ShotScroll = styled.div`width: 13px; height: 40px; background: #f0f0f0; padding: 6px 3px; flex: none;`;
const ShotList = styled.div`display: flex; flex-direction: column; margin-left: 14px;`;
const SortMark = styled.div`align-self: flex-start; margin-left: 9px;`;
const ShotSelected = styled.div`display: flex; align-items: flex-start; width: 335px; height: 20px; margin-top: 4px; background: #cce8ff; border: 1px solid #99d1ff; padding: 0 0 0 2px;`;

const WordStatus = styled.div`display: flex; align-items: center; flex: none; height: 27px; background: #f3f2f1; border-top: 1px solid #c8c6c4; padding-left: 10px;`;
const ModeOn = styled.div`display: flex; align-items: center; justify-content: center; width: 50px; height: 26px; margin-left: 17px; background: #d0cecc; flex: none;`;
const SearchBox = styled.div`display: flex; align-items: center; width: 430px; height: 50px; background: #f2f2f2; border: 1px solid #c4c0c0; padding-left: 14px; flex: none;`;
const Slider = styled.div`display: flex; align-items: center; width: 125px; height: 14px; margin-left: 6px; flex: none; background: linear-gradient(#555, #555) center / 125px 1px no-repeat; padding-left: 60px;`;

const menu: [string, number, number][] = [
  ['Fil', 16, 0], ['Hjem', 39, 40], ['Sett inn', 59, 29], ['Tegn', 36, 27], ['Utforming', 78, 27], ['Oppsett', 61, 28], ['Referanser', 80, 28],
  ['Masseutsendelser', 134, 28], ['Se gjennom', 91, 27], ['Visning', 56, 28], ['Hjelp', 39, 27],
];
const pale = '#b4c5e4';
const dim = '#5b80ba';

function Word() {
  return (
    <>
      <WordTitle>
        <Decoration>
          <Glyph width="575" height="43" viewBox="0 0 575 43">
            <g stroke="#264d8b" fill="none">
              <path d="M4 0V40M14 0V30M24 0V43M34 0V43M44 0V38" strokeWidth="4" /><path d="M62 0V30M84 0V43M112 0V43" strokeWidth="11" />
              <path d="M134 0V43M144 0V43M154 0V43M164 0V43M174 0V43M184 0V43" strokeWidth="4" /><path d="M196 0A40 36 0 0 1 196 40" strokeWidth="24" />
              <path d="M260 50A22 22 0 0 1 304 50M272 50A10 10 0 0 1 292 50" strokeWidth="8" />
              <path d="M340 0L390 43M352 0L402 43M366 0L416 43M380 0L430 43" strokeWidth="5" /><path d="M446 0A60 60 0 0 1 440 43" strokeWidth="16" />
              <path d="M520 0L480 43M536 0L496 43M552 0L512 43M568 0L528 43M584 0L544 43" strokeWidth="5" />
            </g>
          </Glyph>
        </Decoration>
        <Label w={115} size={13.500} color={dim}>Lagre automatisk</Label>
        <Toggle><Knob /></Toggle>
        <Line w={20} h={20} ml={16} c="#d5dff0" sw={1.300} d="M1 1H19V19H3L1 17zM5 1V8H15V1M5 19V12.500H15V19M9 19V15" />
        <Line w={19} h={19} ml={16} c={dim} sw={1.500} d="M1 1V8H8M1 7.500Q8 0 14 3T13 13L7 19" />
        <Chevron w={7} h={4} ml={8} c={dim} />
        <Line w={20} h={19} ml={13} c={dim} sw={1.500} d="M1 1H7V7M6.500 1.500A9 9 0 1 0 14 1.800" />
        <Line w={9} h={8} ml={20} c="#dfe7f4" sw={1.300} d="M0 .7H9M1.500 3.500L4.500 6.500L7.500 3.500" />
        <Label w={676} ml={132} size={13.500} color={pale}>Laboving 9a Installere og konfigurere webtjeneren IIS.docx  -  Beskyttet visning • Lagret i denne PC-en</Label>
        <Chevron w={12} h={7} ml={6} c={pale} />
        <Lens s={17} ml={136} c={pale} sw={1} />
        <Glyph width="19" height="18" viewBox="0 0 19 18" $ml={44}><path d="M9.500 0L19 18H0z" fill="#e97b0e" /><path d="M9.500 4L16.500 16.500H2.500z" fill="#fbe3a8" /><path d="M9.500 7V12.500M9.500 13.500V15.500" stroke="#333" strokeWidth="1.700" /></Glyph>
        <Label w={177} ml={13} size={13.500} color={pale}>Gorm Gustav Taubøll (Elev)</Label>
        <Badge><Label w={19} size={12.500} color="#fff">GG</Label></Badge>
        <Line w={20} h={20} ml={33} c={pale} sw={1.200} d="M1 19L4 12L11 5L15 9L8 16zM4 12L8 16M9 7L13 11M13 4L14 1M16 6L19 3M17 9H20" />
        <Line w={16} h={13} ml={39} c={pale} sw={1.200} d="M.5 .5H15.500V12.500H.5zM.5 3.500H15.500M8 12V6M5.500 8L8 5.500L10.500 8" />
        <Minus s={12} ml={44} c={pale} />
        <Line w={12} h={12} ml={45} c={pale} d="M.5 2.500H9.500V11.500H.5zM2.500 2.500V.5H11.500V9.500H9.500" sw={1.200} />
        <Cross s={13} ml={45} c={pale} />
      </WordTitle>
      <Ribbon>
        {menu.map(([t, w, ml]) => <Label key={t} w={w} ml={ml} size={15} color="#444">{t}</Label>)}
        <RibbonButton $w={147} $ml={661}>
          <Line w={14} h={12} c="#2b579a" sw={1.200} d="M.5 .5H13.500V8.500H7L4 11.500V8.500H.5z" /><Label w={106} ml={5} size={14.500} weight={700} color="#2b579a">Kommentarer</Label>
        </RibbonButton>
        <RibbonButton $w={83} $ml={10} $off>
          <Line w={14} h={13} c="#b0aeac" sw={1.200} d="M4 5H.5V12.500H12.500V8M4 9Q4 4 9 4V6.500L13.500 3L9 0V2.200" /><Label w={24} ml={6} size={14.500} weight={600} color="#b0aeac">Del</Label><Chevron w={7} h={4} ml={14} c="#b0aeac" />
        </RibbonButton>
      </Ribbon>
      <Notice>
        <Glyph width="24" height="27" viewBox="0 0 24 27"><path d="M12 1Q16 5 23 4.500V12Q23 21 12 26Q1 21 1 12V4.500Q8 5 12 1z" fill="#fff" stroke="#2a8fd0" strokeWidth="1.800" /><path d="M12 10.500V20" stroke="#2176b5" strokeWidth="2.400" /><path d="M12 6V8.500" stroke="#2176b5" strokeWidth="2.400" /></Glyph>
        <Label w={139} ml={13} size={13.600} color="#333">BESKYTTET VISNING</Label>
        <Label w={889} ml={12} size={13.300} color="#333" under>Vær forsiktig – filer fra Internett kan inneholde virus. Hvis du ikke trenger å redigere den, er det tryggere å holde seg i beskyttet visning.</Label>
        <NoticeButton><Label w={119} size={13.300} color="#333">Aktiver redigering</Label></NoticeButton>
        <Cross s={8} ml={621} c="#555" sw={1.800} />
      </Notice>
      <Canvas>
        <Page $h={683}>
          <Para $mt={-10}><Doc w={208}>Test disse adressene også.</Doc></Para>
          <Para $mt={19} $n><Doc w={15}>3.</Doc><Doc w={616}>Logg inn på den virtuelle <b>klientmaskinen</b> din med en vilkårlig bruker (f.eks.</Doc></Para>
          <Para><Doc w={209}>WORKSTATION\admin)</Doc></Para>
          <Para $mt={11} $n><Doc w={15}>4.</Doc><Doc w={657}>Start en webleser og slå opp alle adressene i pkt. 1 &amp; 2 på nytt fra klientmaskinen.</Doc></Para>
          <Para $mt={20}><Doc w={667}>Hvilke av disse adressene fungerer fra klientmaskinen? ______________________</Doc></Para>
          <Para $mt={20}><Doc w={661}>Hvorfor virker ikke de andre adressene fra klientmaskinen? __________________</Doc></Para>
          <Para $mt={20} $n><Doc w={15}>5.</Doc><Doc w={600}>Bytt til <u><b>tjenermaskinen</b></u>, bruk <i>File Explorer</i> (filbehandler) og finn mappen</Doc></Para>
          <Para><Doc w={764}><b>c:\inetpub\wwwroot</b>. Studer innholdet av mappen. Denne mappen er "rotmappe" for nettstedet</Doc></Para>
          <Para><Doc w={280}>(<i>Default Web Site</i>) på webtjeneren.</Doc></Para>
          <Para $mt={20}><Doc w={686}>Hvilke NTFS-rettigheter har (den innebygde) gruppen <b>IIS_IUSRS</b> til denne mappen?</Doc></Para>
          <Para $mt={20}><Doc w={660}>{'_'.repeat(66)}</Doc></Para>
          <Para $mt={20}><Doc w={739}><b>Forklaring:</b> Vanligvis vil man at en webtjener skal kunne brukes av «alle» brukere, også de</Doc></Para>
          <Para><Doc w={702}>som <b>ikke</b> har en brukerkonto i tjenerens domene. Dette kalles <i>anonym</i> tilgang. Gruppen</Doc></Para>
          <Para><Doc w={687}><b>IIS_IUSRS</b> bestemmer hvilke NTFS-rettigheter som anonyme webbrukere har når de</Doc></Para>
          <Para><Doc w={757}>aksesserer webtjeneren. Derfor må gruppen ha leserettigheter til alle mapper/filer som hører til</Doc></Para>
          <Para><Doc w={208}>nettstedet på webtjeneren.</Doc></Para>
          <PageNumber><Label w={10} size={20} font={SERIF} color="#808080">2</Label></PageNumber>
        </Page>
        <Page $h={260}>
          <Head2><Label w={420} size={20} font={SERIF} italic color="#808080">Labøving: Installere og konfigurere webtjeneren IIS</Label></Head2>
          <Shot>
            <ShotRow $h={25} $pl={8}>
              <SmallFolder /><Label w={39} ml={5} size={9.500}>wwwroot</Label>
              <Minus s={8} ml={380} /><Line w={9} h={9} ml={27} d="M.5 .5H8.500V8.500H.5z" /><Cross s={9} ml={27} />
            </ShotRow>
            <ShotRow $h={31} $pl={11}>
              <ArrowL s={10} c="#666" /><ArrowR s={10} ml={13} c="#ccc" /><Chevron w={5} h={3} ml={12} c="#777" /><ArrowU s={10} ml={9} />
              <Field $w={273} $h={24} $ml={6} $pl={3}>
                <SmallFolder /><Label w={8} ml={4} size={13} color="#666">«</Label><Label w={32} ml={5} size={9.500}>inetpub</Label><Right ml={7} s={3} /><Label w={39} ml={8} size={9.500}>wwwroot</Label>
                <Chevron w={7} h={4} ml={114} c="#666" sw={1.500} /><Rule $h={22} $ml={7} $c="#d9d9d9" /><Reload s={9} ml={8} sw={1.500} />
              </Field>
              <Field $w={160} $h={24} $ml={9} $pl={142}><Lens s={9} c="#666" /></Field>
            </ShotRow>
            <ShotBody>
              <ShotSide>
                <ShotRow $h={18} $pl={34}><SmallFolder /><Label w={32} ml={6} size={9.500}>inetpub</Label></ShotRow>
                <ShotRow $h={19} $pl={40}><SmallFolder /><Label w={29} ml={5} size={9.500}>custerr</Label></ShotRow>
              </ShotSide>
              <ShotScroll><Caret w={6} h={5} c="#444" sw={1.500} /></ShotScroll>
              <ShotList>
                <ShotRow $h={20} $pl={2}>
                  <Label w={26} size={9.500} color="#44546f">Name</Label><SortMark><Caret w={6} h={4} c="#888" /></SortMark>
                  <Rule $h={20} $ml={37} $c="#e5e5e5" /><Label w={60} ml={5} size={9.500} color="#44546f">Date modified</Label>
                  <Rule $h={20} $ml={34} $c="#e5e5e5" /><Label w={19} ml={5} size={9.500} color="#44546f">Type</Label>
                  <Rule $h={20} $ml={70} $c="#e5e5e5" /><Label w={17} ml={5} size={9.500} color="#44546f">Size</Label><Rule $h={20} $ml={40} $c="#e5e5e5" />
                </ShotRow>
                <ShotSelected>
                  <Glyph width="12" height="12" viewBox="0 0 12 12"><circle cx="6" cy="6" r="6" fill="#1a86d0" /><path d="M1 4A6 6 0 0 1 12 6L8 7Q7 3 1 4z" fill="#3ecb7c" /></Glyph>
                  <Label w={38} ml={4} size={9.500}>iisstart.htm</Label><Label w={67} ml={28} size={9.500} color="#555">30.09.2022 11:48</Label><Label w={75} ml={33} size={9.500} color="#555">Microsoft Edge H...</Label><Label w={18} ml={53} size={9.500} color="#555">1 KB</Label>
                </ShotSelected>
              </ShotList>
            </ShotBody>
          </Shot>
        </Page>
      </Canvas>
      <WordStatus>
        <Label w={71} size={11.500} color="#444">Side 2 av 10</Label><Label w={53} ml={24} size={11.500} color="#444">2271 ord</Label><Label w={124} ml={23} size={11.500} color="#a8a6a4">Tekstforutsigelser: på</Label>
        <Glyph width="18" height="16" viewBox="0 0 18 16" $ml={1014}><path d="M7 11.500H.700V.700H15.500V5M3 14.500H7" fill="none" stroke="#444" strokeWidth="1.300" /><circle cx="12.500" cy="10.500" r="3.200" fill="none" stroke="#444" strokeWidth="2.200" /><path d="M12.500 5.500V15.500M8 8L17 13M17 8L8 13" stroke="#444" /></Glyph>
        <Label w={114} ml={3} size={11.800} color="#333">Visningsinnstillinger</Label>
        <Line w={17} h={16} ml={22} c="#444" sw={1.300} d="M3.500 .5H.5V15.500H3.500M13.500 .5H16.500V3M16.500 13V15.500H13.500M5 3.500H10L13 6.500V13H5zM10 3.500V6.500H13" />
        <Label w={33} ml={4} size={11.800} color="#333">Fokus</Label>
        <Line w={16} h={15} ml={31} c="#444" sw={1.200} d="M8 2Q5 0 .5 1V13Q5 12 8 14Q11 12 15.500 13V1Q11 0 8 2zV14M2.500 4H6M2.500 6.500H6M2.500 9H6M10 4H13.500M10 6.500H13.500M10 9H13.500" />
        <ModeOn><Line w={14} h={17} c="#444" sw={1.200} d="M.5 .5H13.500V16.500H.5zM3 4H11M3 6.500H11M3 9H11M3 11.500H11M3 14H8" /></ModeOn>
        <Glyph width="18" height="16" viewBox="0 0 18 16" $ml={17}><path d="M7 15.500H.500V.500H14.500V5M3 3.500H12M3 6H8M3 8.500H7M3 11H6" fill="none" stroke="#444" strokeWidth="1.200" /><circle cx="12.500" cy="10.500" r="4.800" fill="none" stroke="#444" strokeWidth="1.200" /><path d="M8 10.500H17M12.500 6Q9.500 10.500 12.500 15Q15.500 10.500 12.500 6" fill="none" stroke="#444" /></Glyph>
        <Minus s={10} ml={22} c="#444" />
        <Slider><Rule $w={6} $h={14} $c="#333" /></Slider>
        <Line w={10} h={10} ml={5} c="#444" d="M5 0V10M0 5H10" /><Label w={35} ml={17} size={11.800} color="#444">100 %</Label>
      </WordStatus>
    </>
  );
}

export default function App() {
  return (
    <>
      <Global />
      <Screen>
        <Browser />
        <ConsoleHead>
          <HeadTitle><Label w={75} size={14.500} weight={700} color="#fff" font={ARIAL}>WinServer</Label></HeadTitle>
          <WebButton $w={189}><Label w={173} size={13.333} font={ARIAL}>Enforce US Keyboard Layout</Label></WebButton>
          <WebButton $w={110} $ml={4}><Label w={94} size={13.333} font={ARIAL}>View Fullscreen</Label></WebButton>
          <WebButton $w={141} $ml={4}><Label w={125} size={13.333} font={ARIAL}>Send Ctrl+Alt+Delete</Label></WebButton>
        </ConsoleHead>
        <VmRow><VirtualMachine /></VmRow>
        <HostBar $h={40}>
          <HostButton $w={48} $h={40}><WinLogo s={16} /></HostButton>
          <HostButton $w={48} $h={40}><Lens s={16} c="#eee" sw={1.100} /></HostButton>
          <HostButton $w={48} $h={40}><TaskView s={15} /></HostButton>
          <Rule $w={2} $h={1} $c="transparent" />
          <AppButtons w={49} h={40} s={24} line={40} />
          <Spring />
          <ClockCol $w={56} $ml={0} $gap={1}><Label w={28} size={11.500} color="#fff">08:53</Label><Label w={54} size={11.500} color="#fff">18.11.2022</Label></ClockCol>
          <Rule $w={6} $h={1} $c="transparent" />
        </HostBar>
        <Word />
        <BottomBar $h={50}>
          <HostButton $w={60} $h={50}><WinLogo s={20} /></HostButton>
          <SearchBox><Lens s={20} c="#222" sw={1} /><Label w={160} ml={15} size={16} color="#333">Skriv her for å søke</Label></SearchBox>
          <HostButton $w={60} $h={50}><TaskView s={19} /></HostButton>
          <Rule $w={3} $h={1} $c="transparent" />
          <AppButtons w={62} h={50} s={30} line={51} />
          <Glyph width="31" height="26" viewBox="0 0 31 26" $ml={270}><circle cx="15" cy="14" r="9" fill="#c6dafc" /><circle cx="7.500" cy="18" r="7" fill="#9dbcf5" /><circle cx="23" cy="17.500" r="7.500" fill="#a9c4f7" /><path d="M7 16H24V25H7z" fill="#a5c1f7" /><circle cx="26.500" cy="3" r="4.200" fill="#c42b1c" /></Glyph>
          <Label w={27} ml={10} size={16} color="#fff">1°C</Label><Label w={43} ml={10} size={16} color="#fff">Skyet</Label>
          <Caret w={16} h={9} ml={31} c="#fff" sw={1.300} />
          <Glyph width="21" height="14" viewBox="0 0 21 14" $ml={12}><circle cx="9" cy="5.500" r="5.500" fill="#0a64b8" /><circle cx="5" cy="9" r="4.800" fill="#1482d8" /><circle cx="15.500" cy="8.500" r="5.300" fill="#1d96e6" /><path d="M5 8H16V13.800H5z" fill="#28a2ee" /></Glyph>
          <Glyph width="20" height="14" viewBox="0 0 20 14" $ml={10}><path d="M5.500 3.500H17.500V12.500H3V8" fill="none" stroke="#fff" strokeWidth="1.200" /><path d="M5.500 5.500H15.500V10.500H5z" fill="#fff" /><path d="M19.500 6V10M.5 1H5.500V4Q5.500 6 3 6T.5 4zM1.500 -1V1M4.500 -1V1M3 6V9" stroke="#fff" strokeWidth="1.200" fill="none" /></Glyph>
          <Line w={15} h={17} ml={13} c="#eee" sw={1.200} d="M1 4.500H9.500V12.500H1zM9.500 7.500L13.500 5.500V11.500L9.500 9.500M2.500 1.500Q7 -1 11.500 1.500M2.500 15.500Q7 18 11.500 15.500" />
          <Glyph width="16" height="16" viewBox="0 0 16 16" $ml={15}><path d="M1 14A14 14 0 0 1 14 1M5 15A11 11 0 0 1 15 5M9 15.500A7 7 0 0 1 15.500 9" stroke="#ddd" fill="none" strokeWidth="1.200" /><circle cx="14" cy="14" r="1.600" fill="#fff" /></Glyph>
          <Glyph width="20" height="16" viewBox="0 0 20 16" $ml={10}><path d="M.6 5.500H3L7 1.500V14.500L3 10.500H.6z" fill="none" stroke="#eee" strokeWidth="1.200" /><path d="M10 5.500Q11.500 8 10 10.500" stroke="#eee" fill="none" /><path d="M13 3.500Q16 8 13 12.500M16 1.500Q20 8 16 14.500" stroke="#777" fill="none" /></Glyph>
          <ClockCol $w={70} $ml={14} $gap={3}><Label w={34} size={13.500} color="#fff">08:53</Label><Label w={69} size={13.500} color="#fff">18.11.2022</Label></ClockCol>
          <Line w={20} h={20} ml={22} c="#fff" sw={1.200} d="M1 1H19V16H13L10 19L7 16H1z" />
          <Rule $h={50} $ml={25} $c="#5a5a5a" />
        </BottomBar>
      </Screen>
    </>
  );
}
